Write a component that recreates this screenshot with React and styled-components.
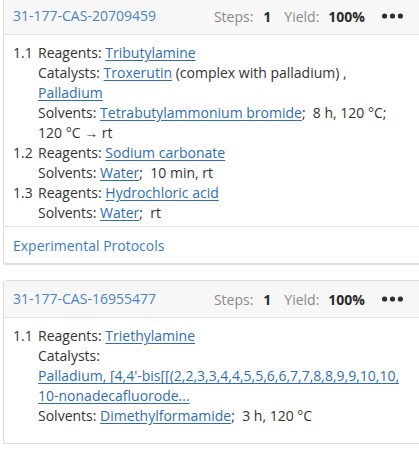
import React from "react";
import styled, { createGlobalStyle } from "styled-components";

const Global = createGlobalStyle`
  html, body { margin: 0; padding: 0; background: #fff; overflow: hidden; }
  body { font-family: "Open Sans", "Liberation Sans", sans-serif; font-size: 14px; color: #333; }
`;

const Page = styled.div`
  display: flex;
  flex-direction: column;
  gap: 16px;
  margin-top: -3px;
  padding-left: 3px;
  width: 430px;
`;

const Card = styled.div`
  background: #fff;
  border: 1px solid #dedede;
  border-radius: 3px;
  box-shadow: 0 1px 1px rgba(0, 0, 0, 0.14);
  overflow: hidden;
`;

const Header = styled.div`
  display: flex;
  align-items: center;
  height: 36px;
  padding: 0 29px 0 9px;
  background: #f7f7f7;
  border-bottom: 1px solid #e2e2e2;
`;

const Id = styled.span`
  flex: 1;
  color: #4a84c4;
  line-height: 20px;
`;

const Meta = styled.span`
  color: #8a8a8a;
  margin-left: ${(p) => p.$gap || 0}px;
`;

const MetaValue = styled.span`
  color: #2b2b2b;
  font-weight: 700;
  margin-left: ${(p) => p.$gap || 0}px;
`;

const Dots = styled.svg`
  margin-left: 17px;
  display: block;
`;

const Body = styled.div`
  padding: 8px 33px ${(p) => p.$bottom}px 9px;
`;

const Steps = styled.div`
  display: grid;
  grid-template-columns: 25px 1fr;
  line-height: 20px;
`;

const Num = styled.div`
  color: #333;
`;

const Lines = styled.div`
  display: flex;
  flex-direction: column;
`;

const Line = styled.div`
  color: #333;
`;

const Link = styled.a`
  color: #2f6db3;
  text-decoration: underline;
  text-underline-offset: 2px;
  cursor: pointer;
  white-space: ${(p) => (p.$nowrap ? "nowrap" : "normal")};
`;

const Footer = styled.div`
  display: flex;
  align-items: center;
  height: 36px;
  padding: 0 9px;
  border-top: 1px solid #e2e2e2;
  color: #3d7cc2;
`;

function DotsIcon() {
  return (
    <Dots width="21" height="6" viewBox="0 0 21 6">
      <circle cx="2.6" cy="3" r="2.6" fill="#2e2e2e" />
      <circle cx="10.5" cy="3" r="2.6" fill="#2e2e2e" />
      <circle cx="18.4" cy="3" r="2.6" fill="#2e2e2e" />
    </Dots>
  );
}

function CardHeader({ id }) {
  return (
    <Header>
      <Id>{id}</Id>
      <Meta>Steps:</Meta>
      <MetaValue $gap={10}>1</MetaValue>
      <Meta $gap={13}>Yield:</Meta>
      <MetaValue $gap={9}>100%</MetaValue>
      <DotsIcon />
    </Header>
  );
}

const NB = "\u00a0";

export default function App() {
  return (
    <>
      <Global />
      <Page>
        <Card>
          <CardHeader id="31-177-CAS-20709459" />
          <Body $bottom={3}>
            <Steps>
              <Num>1.1</Num>
              <Lines>
                <Line>
                  Reagents: <Link>Tributylamine</Link>
                </Line>
                <Line>
                  Catalysts: <Link>Troxerutin</Link> (complex with palladium) ,{" "}
                  <Link>Palladium</Link>
                </Line>
                <Line>
                  Solvents: <Link>Tetrabutylammonium bromide</Link>;{NB} 8{NB}h, 120{NB}°C;{" "}
                  120{NB}°C{NB}→{NB}rt
                </Line>
              </Lines>
              <Num>1.2</Num>
              <Lines>
                <Line>
                  Reagents: <Link>Sodium carbonate</Link>
                </Line>
                <Line>
                  Solvents: <Link>Water</Link>;{NB} 10 min, rt
                </Line>
              </Lines>
              <Num>1.3</Num>
              <Lines>
                <Line>
                  Reagents: <Link>Hydrochloric acid</Link>
                </Line>
                <Line>
                  Solvents: <Link>Water</Link>;{NB} rt
                </Line>
              </Lines>
            </Steps>
          </Body>
          <Footer>Experimental Protocols</Footer>
        </Card>
        <Card>
          <CardHeader id="31-177-CAS-16955477" />
          <Body $bottom={17}>
            <Steps>
              <Num>1.1</Num>
              <Lines>
                <Line>
                  Reagents: <Link>Triethylamine</Link>
                </Line>
                <Line>Catalysts:</Line>
                <Line>
                  <Link $nowrap>
                    Palladium, [4,4'-bis[[(2,2,3,3,4,4,5,5,6,6,7,7,8,8,9,9,10,10,
                    <br />
                    10-nonadecafluorode...
                  </Link>
                </Line>
                <Line>
                  Solvents: <Link>Dimethylformamide</Link>;{NB} 3 h, 120{NB}°C
                </Line>
              </Lines>
            </Steps>
          </Body>
        </Card>
      </Page>
    </>
  );
}
